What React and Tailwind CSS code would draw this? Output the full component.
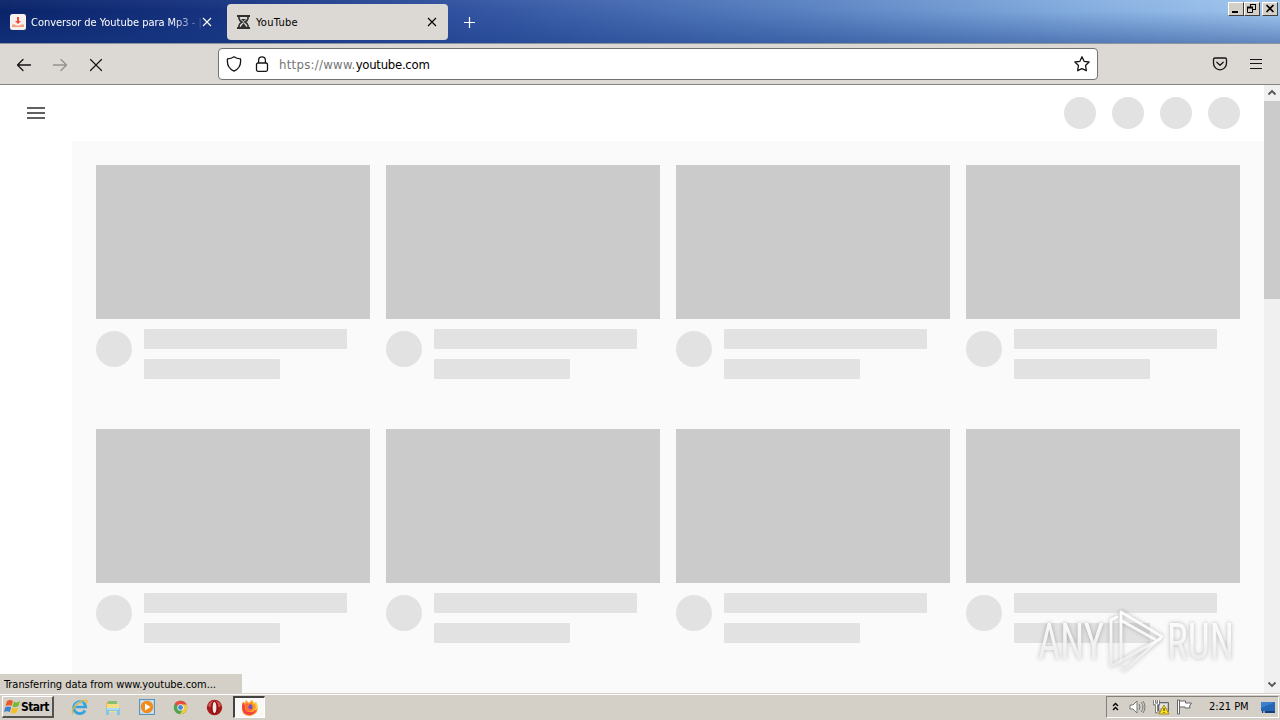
import React from "react";

const Close = ({ className = "" }) => (
  <svg className={className} width="10" height="10" viewBox="0 0 10 10" fill="none" stroke="currentColor" strokeWidth="1.1">
    <path d="M1 1l8 8M9 1L1 9" />
  </svg>
);

function TabStrip() {
  return (
    <div className="relative flex h-[43px] shrink-0 bg-[linear-gradient(to_right,#0a246a_0%,#173380_17%,#3152a0_36%,#5880c0_62%,#83acde_84%,#a0c6ee_100%)]">
      <div className="absolute inset-0 bg-[linear-gradient(to_bottom,rgba(255,255,255,.04),rgba(20,50,125,0)_25%,rgba(24,60,135,.45))]" />
      <div className="relative flex w-[227px] items-center pt-px pl-[10px] text-white">
        <svg width="16" height="16" viewBox="0 0 16 16">
          <rect width="16" height="16" rx="2.5" fill="#f8f0ee" />
          <path d="M7 3h2v4h2L8 10 5 7h2z" fill="#e9513f" />
          <path d="M2 10.5h3l1 1h4l1-1h3V13H2z" fill="#f4a080" />
        </svg>
        <div className="ml-[5px] w-[170px] pt-[2px] whitespace-nowrap text-[11px] tracking-[-0.03px] [mask-image:linear-gradient(to_right,black_140px,transparent_176px)]">
          Conversor de Youtube para Mp3 - |
        </div>
        <Close className="ml-px" />
      </div>
      <div className="relative mt-1 flex h-9 w-[221px] items-center rounded bg-[#dcd9d4] text-black">
        <svg className="ml-[10px]" width="13" height="14" viewBox="0 0 13 14">
          <path d="M0 0h13v2H0zM0 12h13v2H0z" fill="#303030" />
          <path d="M2 2v1.500Q2 5 5 7 2 9 2 10.500V12M11 2v1.500Q11 5 8 7q3 2 3 3.500V12" fill="none" stroke="#303030" strokeWidth="1.700" />
          <path d="M4 4h5L6.500 6.300zM6.500 8L9.500 12h-6z" fill="#303030" />
        </svg>
        <span className="ml-[6px] pt-[2px] text-[11px] tracking-[0.28px]">YouTube</span>
        <Close className="absolute left-[200px] top-[13px]" />
      </div>
      <svg className="relative mt-[17px] ml-[16px]" width="12" height="12" viewBox="0 0 12 12" stroke="white" strokeWidth="1.2">
        <path d="M5.500 0v11M0 5.500h11" />
      </svg>
      <div className="relative mt-[2px] mr-[2px] ml-auto flex h-[14px]">
        <WindowButton><path d="M4 10h6" stroke="black" strokeWidth="2" /></WindowButton>
        <WindowButton>
          <path d="M6 2.5h6M6.5 2v3M11.5 2v5M9 7.5h3" stroke="black" />
          <path d="M3 5.5h6" stroke="black" strokeWidth="2" />
          <path d="M3.5 5v5.5h5V5" stroke="black" fill="none" />
        </WindowButton>
        <div className="w-[2px]" />
        <WindowButton><path d="M4.5 3l7 7M11.5 3l-7 7" stroke="black" strokeWidth="1.7" /></WindowButton>
      </div>
    </div>
  );
}

function WindowButton({ children }) {
  return (
    <div className="h-[14px] w-4 border-t border-r border-b border-l border-t-white border-r-[#404040] border-b-[#404040] border-l-white bg-[#d4d0c8]">
      <svg className="-mt-px -ml-px" width="15" height="13" viewBox="0 0 15 13">{children}</svg>
    </div>
  );
}

function Toolbar() {
  return (
    <div className="relative flex h-[42px] shrink-0 items-center border-t border-b border-t-[#8f939d] border-b-[#85837f] bg-[#dcd9d4] text-[#151515]">
      <svg className="mt-px ml-4" width="16" height="16" viewBox="0 0 16 16" fill="none" stroke="currentColor" strokeWidth="1.3" strokeLinecap="round" strokeLinejoin="round">
        <path d="M14.500 8h-13M7 2.500L1.500 8 7 13.500" />
      </svg>
      <svg className="mt-px ml-5 text-[#92908d]" width="16" height="16" viewBox="0 0 16 16" fill="none" stroke="currentColor" strokeWidth="1.3" strokeLinecap="round" strokeLinejoin="round">
        <path d="M1.500 8h13M9 2.500L14.500 8 9 13.500" />
      </svg>
      <svg className="mt-[2px] ml-5" width="16" height="16" viewBox="0 0 16 16" fill="none" stroke="currentColor" strokeWidth="1.2" strokeLinecap="round">
        <path d="M2.500 2.500l11 11M13.500 2.500l-11 11" />
      </svg>
      <div className="ml-[114px] flex h-8 w-[880px] items-center rounded border border-[#74726f] bg-white">
        <svg className="ml-[7px]" width="16" height="16" viewBox="0 0 16 16" fill="none" stroke="currentColor" strokeWidth="1.3" strokeLinejoin="round">
          <path d="M8 .8c2 1.5 4 2 6.5 2.1.6 5-1.3 10-6.500 12.300C2.800 12.900.9 7.900 1.500 2.900 4 2.800 6 2.300 8 .8z" />
        </svg>
        <svg className="ml-3" width="16" height="16" viewBox="0 0 16 16" fill="none" stroke="currentColor" strokeWidth="1.300">
          <rect x="2.500" y="7" width="11" height="8.300" rx="1.500" />
          <path d="M4.600 7V4.400C4.600 2.200 6 .9 8 .9s3.400 1.300 3.400 3.500V7" />
        </svg>
        <div className="ml-[9px] pt-px whitespace-nowrap text-[13px] text-[#747474]">
          <span className="tracking-[0.29px]">https://www.</span><span className="tracking-[-0.26px] text-black">youtube.com</span>
        </div>
        <svg className="mr-[7px] ml-auto" width="16" height="16" viewBox="0 0 16 16" fill="none" stroke="currentColor" strokeWidth="1.3" strokeLinejoin="round">
          <path d="M8 .8l2.100 4.500 5 .7-3.600 3.500.9 5.200L8 12.600l-4.400 2.100.9-5.200L.9 6l5-.7z" />
        </svg>
      </div>
      <svg className="ml-[114px]" width="16" height="16" viewBox="0 0 16 16" fill="none" stroke="currentColor" strokeWidth="1.300" strokeLinecap="round" strokeLinejoin="round">
        <path d="M3 2h10q1.500 0 1.500 1.500V7.300a6.500 6.500 0 01-13 0V3.500Q1.500 2 3 2z" />
        <path d="M4.800 6.200L8 9.200l3.200-3" />
      </svg>
      <svg className="ml-5" width="16" height="16" viewBox="0 0 16 16" fill="none" stroke="currentColor" strokeWidth="1.200">
        <path d="M2 3.500h12M2 7.500h12M2 12.500h12" />
      </svg>
    </div>
  );
}

function VideoPlaceholder() {
  return (
    <div className="h-[264px] w-[274px]">
      <div className="h-[154px] bg-[#cbcbcb]" />
      <div className="flex gap-3 pt-[10px]">
        <div className="mt-[2px] size-9 shrink-0 rounded-full bg-[#e2e2e2]" />
        <div className="flex flex-col gap-[10px]">
          <div className="h-5 w-[203px] rounded-[1px] bg-[#e2e2e2]" />
          <div className="h-5 w-[136px] rounded-[1px] bg-[#e2e2e2]" />
        </div>
      </div>
    </div>
  );
}

function Watermark() {
  return (
    <svg className="absolute top-[516px] left-[1030px] overflow-visible drop-shadow-[0_0_2px_rgba(0,0,0,.32)]" width="214" height="80" viewBox="1030 601 214 80">
      <defs>
        <linearGradient id="fade" gradientUnits="userSpaceOnUse" x1="0" y1="610" x2="0" y2="670">
          <stop offset="0" stopColor="#fff" stopOpacity=".95" />
          <stop offset=".45" stopColor="#fff" stopOpacity=".85" />
          <stop offset="1" stopColor="#eee" stopOpacity=".65" />
        </linearGradient>
      </defs>
      <g fill="url(#fade)" fontFamily="Roboto, sans-serif" fontSize="50">
        <text x="1038" y="659" textLength="66" lengthAdjust="spacingAndGlyphs">ANY</text>
        <text x="1167" y="659" textLength="67" lengthAdjust="spacingAndGlyphs">RUN</text>
      </g>
      <g fill="none" stroke="url(#fade)" strokeWidth="2.800" strokeLinejoin="round" strokeLinecap="round">
        <path d="M1121 661V612l41 24.500L1125 670l-4-2" />
        <path d="M1117 617l-6 3v46l8-4" />
        <path d="M1122 621l34 19M1119 662l41-23" />
      </g>
    </svg>
  );
}

function Page() {
  return (
    <div className="relative flex h-[608px] shrink-0 bg-white">
      <div className="flex w-[1264px] flex-col">
        <div className="flex h-14 shrink-0 items-center pr-6 pl-[27px]">
          <div className="flex w-[18px] flex-col gap-[3px]">
            <div className="h-[2px] bg-[#606060]" />
            <div className="h-[2px] bg-[#606060]" />
            <div className="h-[2px] bg-[#606060]" />
          </div>
          <div className="ml-auto flex gap-4">
            {[0, 1, 2, 3].map((i) => <div key={i} className="size-8 rounded-full bg-[#e2e2e2]" />)}
          </div>
        </div>
        <div className="ml-[72px] grid h-[552px] grid-cols-[repeat(4,274px)] content-start gap-x-4 bg-[#fafafa] pt-6 pl-6">
          {Array.from({ length: 8 }, (_, i) => <VideoPlaceholder key={i} />)}
        </div>
      </div>
      <div className="flex w-4 flex-col bg-[#f0f0f0]">
        <svg width="16" height="16" viewBox="0 0 16 16" fill="none" stroke="#555" strokeWidth="1.800"><path d="M4.500 9.500L8 6l3.500 3.500" /></svg>
        <div className="h-[198px] bg-[#cbcbcb]" />
        <svg className="mt-auto" width="16" height="16" viewBox="0 0 16 16" fill="none" stroke="#555" strokeWidth="1.800"><path d="M4.500 5.500L8 9l3.500-3.500" /></svg>
      </div>
      <div className="absolute bottom-0 left-0 h-[19px] w-[242px] bg-[#d4d0c8] pl-[4px] text-[11px] leading-[21px] whitespace-nowrap text-black">
        <span className="tracking-[-0.06px]">Transferring data from www.youtube.com...</span>
      </div>
      <Watermark />
    </div>
  );
}

function Taskbar() {
  return (
    <div className="flex h-[27px] shrink-0 border-t border-[#d4d0c8] bg-[#d4d0c8] text-black">
      <div className="flex w-full border-t border-white">
        <div className="mt-px ml-[2px] flex h-[22px] w-[52px] items-center border-t border-r-2 border-b-2 border-l border-t-white border-r-[#55534f] border-b-[#55534f] border-l-white pl-px">
          <svg className="shrink-0" width="17" height="16" viewBox="0 0 17 16">
            <path d="M3 2q3-2 6 0L7.500 7Q4.500 5.500 1.500 7z" fill="#e85b27" />
            <path d="M10 2.500q3 2 6-.5L14.500 7q-3 2-6 .5z" fill="#79b833" />
            <path d="M1.200 8.200q3-1.500 6 0L5.800 13Q3 11.500 0 13z" fill="#3d82cf" />
            <path d="M8.200 8.500q3 2 6 0L12.700 13.500q-3 2-6 0z" fill="#f3bf25" />
          </svg>
          <span className="text-[12px] font-bold tracking-[-0.55px]">Start</span>
        </div>
        <svg className="mt-[4px] ml-[17px]" width="17" height="17" viewBox="0 0 17 17" fill="none">
          <path d="M14 11.500A6 6 0 1 1 14.700 8H4.500" stroke="#35a2df" strokeWidth="2.700" />
          <path d="M3.500 7.500a5 5 0 0 1 8.500-3" stroke="#9adcf7" />
          <path d="M2 15C-2 11 11-1 15.500 1.500q1 1-.5 3" stroke="#e7b638" strokeWidth="1.300" />
        </svg>
        <svg className="mt-[4px] ml-[17px]" width="16" height="17" viewBox="0 0 16 17">
          <path d="M1 3h5l1 2h7v8H1z" fill="#e6bc56" /><path d="M3 2h9v4H3z" fill="#87bd70" />
          <path d="M2 5h12v8H2z" fill="#f6de88" /><path d="M1 9h14v7h-3v-4H4v4H1z" fill="#83c6e8" />
          <path d="M2 10h12" stroke="#d4f2fa" />
        </svg>
        <svg className="mt-[4px] ml-[18px]" width="17" height="17" viewBox="0 0 17 17">
          <rect x=".5" y=".5" width="15" height="15" fill="#b7d9ef" stroke="#5795bb" />
          <path d="M2 3h3M2 6h3M2 9h3M2 12h3M12 3h2M12 13h2" stroke="#eef9ff" />
          <circle cx="8" cy="8" r="6.200" fill="#f38a19" /><path d="M6 4.500L11.500 8 6 11.500z" fill="#fff" />
        </svg>
        <svg className="mt-[5px] ml-[17px]" width="15" height="15" viewBox="0 0 15 15">
          <circle cx="7.500" cy="7.500" r="6.800" fill="#4da64f" />
          <path d="M7.500 7.500L1.500 4A7 7 0 0 1 13.700 4.600z" fill="#e94b3d" />
          <path d="M7.500 4.500h6a6.800 6.800 0 0 1-6.500 9.800l3-5z" fill="#f5c83d" />
          <circle cx="7.500" cy="7.500" r="3.200" fill="#eef3f8" /><circle cx="7.500" cy="7.500" r="2.400" fill="#4687d0" />
        </svg>
        <svg className="mt-[4px] ml-[18px]" width="17" height="17" viewBox="0 0 17 17">
          <circle cx="8.500" cy="8.500" r="7.700" fill="#a71b1b" />
          <path d="M2 5Q8-2 15 5l-1 3H3z" fill="#cf564c" /><ellipse cx="8.500" cy="8.500" rx="3.600" ry="6.700" fill="#8d0d16" />
          <ellipse cx="8.500" cy="8.500" rx="1.900" ry="5.800" fill="#f1e9e4" />
        </svg>
        <div className="mt-px ml-[10px] flex h-[22px] w-8 items-center justify-center border-t-2 border-r border-b border-l-2 border-t-[#454340] border-r-white border-b-white border-l-[#454340] bg-[#f8f8f6]">
          <svg width="17" height="17" viewBox="0 0 17 17">
            <path d="M2 3l2 1 1-3 3 3 3-3 2 4 2-2q5 12-6 14Q-2 17 2 3z" fill="#ff9b25" />
            <path d="M1 7q0 9 8 9 6-1 7-7-3 5-7 4-6 0-5-6L2 3z" fill="#f23e45" />
            <circle cx="8.500" cy="8" r="3" fill="#704dcc" /><path d="M4 5q4-2 5 1L7 8q1 3 5 2-3 4-7 1z" fill="#ff6e2b" />
            <path d="M11 1q1 4 3 4 2 4-1 7 5-2 3-7-3-1-5-4z" fill="#ffd13a" />
          </svg>
        </div>
        <div className="mt-px mr-[1px] ml-auto flex h-[22px] w-[173px] items-center border-t border-r border-b border-l border-t-[#85827c] border-r-white border-b-white border-l-[#85827c]">
          <svg className="ml-[5px]" width="7" height="10" viewBox="0 0 7 10" fill="none" stroke="black" strokeWidth="1.400"><path d="M1 4l2.500-2.500L6 4M1 8l2.500-2.500L6 8" /></svg>
          <svg className="ml-[10px]" width="17" height="16" viewBox="0 0 17 16" fill="none" stroke="#777" strokeWidth="1">
            <path d="M1 6h3l4-4v12L4 10H1z" fill="#fff" /><path d="M10 5q2 3 0 6M12 3q4 5 0 10M14 2q4 6 0 12" />
          </svg>
          <svg className="ml-[7px]" width="17" height="17" viewBox="0 0 17 17" fill="none">
            <path d="M5.500 3.500h10v9h-10z" fill="#b8bdc0" stroke="#666" /><path d="M7 5h7v4H7z" fill="#dfe5e7" />
            <path d="M1.500 1v4h4V1M3.500 5v8h3" stroke="#666" strokeWidth="2.500" /><path d="M1.500 1v4h4V1M3.500 5v8h3" stroke="#fff" />
            <path d="M11 6l5 9H6z" fill="#ffe11c" stroke="#a78a12" /><path d="M11 9v3M11 13v1" stroke="#222" />
          </svg>
          <svg className="ml-[6px]" width="17" height="16" viewBox="0 0 17 16" stroke="#666" fill="#fff">
            <path d="M1.500 1v14h2V1z" /><path d="M3.500 2h6v2h6l-2 3 .5 2H9V8H3.500z" />
          </svg>
          <span className="ml-[16px] pt-px text-[11px] tracking-[-0.04px] whitespace-nowrap">2:21 PM</span>
          <svg className="mr-[2px] ml-auto" width="16" height="14" viewBox="0 0 16 14">
            <path d="M1 2h14v9H1z" fill="#2468b5" /><path d="M1 2h14L1 8z" fill="#3a80cb" /><path d="M2 11h13v2H2z" fill="#173f77" />
            <path d="M3 12h2" stroke="#fff" />
          </svg>
        </div>
      </div>
    </div>
  );
}

export default function App() {
  return (
    <div className="flex h-[720px] w-[1280px] flex-col overflow-hidden bg-white font-['DejaVu_Sans_Condensed','DejaVu_Sans',sans-serif] [font-stretch:condensed]">
      <TabStrip />
      <Toolbar />
      <Page />
      <Taskbar />
    </div>
  );
}
